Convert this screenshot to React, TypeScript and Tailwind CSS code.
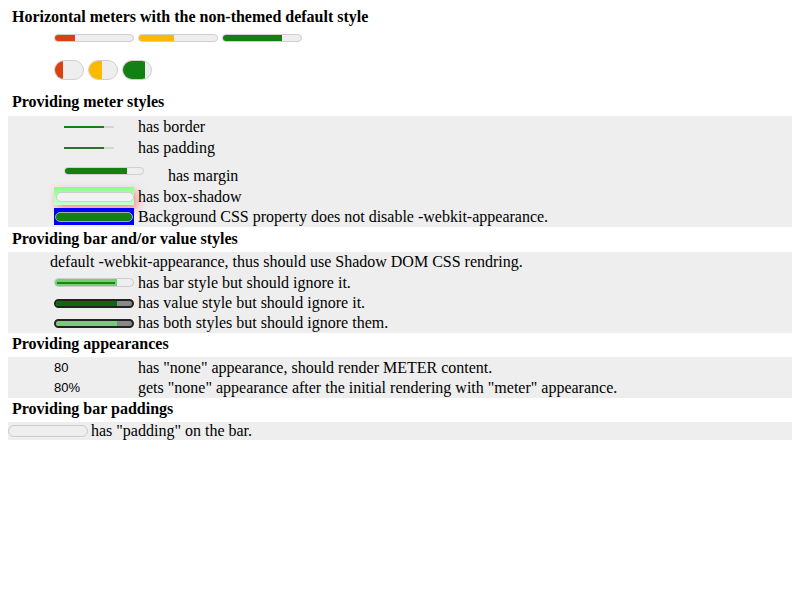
const serif = "font-['Liberation_Serif','Times_New_Roman',serif]";

function Meter({
  w = 80,
  h = 8,
  pct,
  fill,
}: {
  w?: number;
  h?: number;
  pct: number;
  fill: string;
}) {
  return (
    <div
      className="relative shrink-0 overflow-hidden rounded-full border border-[#cfcfcf] bg-[#eeeeee]"
      style={{ width: w, height: h }}
    >
      <div className="h-full" style={{ width: `${pct}%`, background: fill }} />
    </div>
  );
}

function Heading({ children, top }: { children: string; top: number }) {
  return (
    <div
      className="ml-[4px] h-[18px] text-[16px] leading-[18px] font-bold text-black"
      style={{ marginTop: top }}
    >
      {children}
    </div>
  );
}

export default function App() {
  return (
    <div className={`${serif} bg-white px-[8px] pt-[8px] text-[16px] text-black`} style={{ width: 800, height: 600 }}>
      <Heading top={0}>Horizontal meters with the non-themed default style</Heading>

      <div className="ml-[46px] mt-[8px] flex gap-[4px]">
        <Meter pct={26} fill="#d94110" />
        <Meter pct={45} fill="#fdb800" />
        <Meter pct={76} fill="#138013" />
      </div>

      <div className="ml-[46px] mt-[18px] flex gap-[4px]">
        <Meter w={30} h={20} pct={27} fill="#d94110" />
        <Meter w={30} h={20} pct={48} fill="#fdb800" />
        <Meter w={30} h={20} pct={77} fill="#138013" />
      </div>

      <Heading top={13}>Providing meter styles</Heading>

      <div className="mt-[5px] bg-[#eeeeee]">
        <div className="flex h-[21px] items-center">
          <div className="ml-[56px] h-[2px] w-[50px] bg-[#d4d4d4]">
            <div className="h-full w-[80%] bg-[#138013]" />
          </div>
          <span className="ml-[24px] leading-[21px]">has border</span>
        </div>
        <div className="flex h-[21px] items-center">
          <div className="ml-[56px] h-[2px] w-[50px] bg-[#d4d4d4]">
            <div className="h-full w-[80%] bg-[#2f6f2f]" />
          </div>
          <span className="ml-[24px] leading-[21px]">has padding</span>
        </div>
        <div className="flex h-[28px] items-center">
          <div className="ml-[56px] -mt-[3px]">
            <Meter pct={80} fill="#138013" />
          </div>
          <span className="ml-[24px] mt-[6px] leading-[21px]">has margin</span>
        </div>
        <div className="flex h-[20px] items-center">
          <div className="ml-[46px] h-[18px] w-[80px] bg-gradient-to-b from-[#88ff88] to-[#ccffcc] pl-[2px] pt-[5px] shadow-[3px_4px_8px_rgba(255,60,60,0.55)]">
            <div className="h-[10px] w-[78px] rounded-full border border-[#cfcfcf] bg-[#f2f2f2]" />
          </div>
          <span className="ml-[4px] leading-[21px]">has box-shadow</span>
        </div>
        <div className="flex h-[21px] items-center">
          <div className="ml-[46px] flex h-[17px] w-[80px] items-center bg-[#0000ff] px-[1px]">
            <div className="h-[10px] w-full rounded-full border border-[#aaaaaa] bg-[#138013]" />
          </div>
          <span className="ml-[4px] leading-[21px]">Background CSS property does not disable -webkit-appearance.</span>
        </div>
      </div>

      <Heading top={3}>Providing bar and/or value styles</Heading>

      <div className="mt-[4px] bg-[#eeeeee]">
        <div className="flex h-[20px] items-center">
          <span className="ml-[42px] leading-[20px]">default -webkit-appearance, thus should use Shadow DOM CSS rendring.</span>
        </div>
        <div className="flex h-[21px] items-center">
          <div className="relative ml-[46px] h-[9px] w-[80px] overflow-hidden rounded-full border border-[#cccccc] bg-[#eeeeee]">
            <div className="flex h-full w-[80%] items-center bg-[#77cc77] px-[2px]">
              <div className="h-[2px] w-full bg-[#118811]" />
            </div>
          </div>
          <span className="ml-[4px] leading-[21px]">has bar style but should ignore it.</span>
        </div>
        <div className="flex h-[20px] items-center">
          <div className="ml-[46px] h-[9px] w-[80px] overflow-hidden rounded-full border-2 border-[#222222] bg-[#888888]">
            <div className="h-full w-[80%] bg-[#116611]" />
          </div>
          <span className="ml-[4px] leading-[20px]">has value style but should ignore it.</span>
        </div>
        <div className="flex h-[20px] items-center">
          <div className="ml-[46px] h-[9px] w-[80px] overflow-hidden rounded-full border-2 border-[#222222] bg-[#888888]">
            <div className="h-full w-[80%] bg-[#77cc77]" />
          </div>
          <span className="ml-[4px] leading-[20px]">has both styles but should ignore them.</span>
        </div>
      </div>

      <Heading top={2}>Providing appearances</Heading>

      <div className="mt-[4px] bg-[#eeeeee]">
        <div className="flex h-[21px] items-center">
          <span className="ml-[46px] w-[84px] font-['Liberation_Sans',Arial,sans-serif] text-[13px] leading-[21px]">80</span>
          <span className="leading-[21px]">has &quot;none&quot; appearance, should render METER content.</span>
        </div>
        <div className="flex h-[20px] items-center">
          <span className="ml-[46px] w-[84px] font-['Liberation_Sans',Arial,sans-serif] text-[13px] leading-[20px]">80%</span>
          <span className="leading-[20px]">gets &quot;none&quot; appearance after the initial rendering with &quot;meter&quot; appearance.</span>
        </div>
      </div>

      <Heading top={2}>Providing bar paddings</Heading>

      <div className="mt-[4px] bg-[#eeeeee]">
        <div className="flex h-[18px] items-center">
          <div className="h-[12px] w-[80px] rounded-full border border-[#cccccc] bg-[#eeeeee]" />
          <span className="ml-[3px] leading-[18px]">has &quot;padding&quot; on the bar.</span>
        </div>
      </div>
    </div>
  );
}
